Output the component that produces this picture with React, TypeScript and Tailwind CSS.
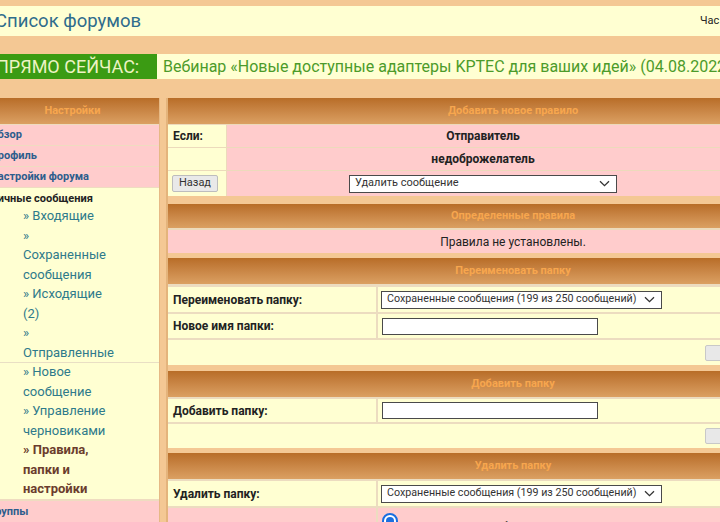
import React from 'react';

// Шапка секции с коричневым градиентом
const SectionHeader = ({ title, h = 'h-[26px]' }: { title: string; h?: string }) => (
  <div
    className={`${h} bg-gradient-to-b from-[#b86d27] to-[#dba062] flex items-center justify-center text-[11px] font-bold text-[#f7a64e]`}
  >
    {title}
  </div>
);

const Chevron = () => (
  <svg width="11" height="7" viewBox="0 0 11 7" className="shrink-0">
    <path d="M1 1.2 L5.5 5.6 L10 1.2" fill="none" stroke="#333" strokeWidth="1.3" />
  </svg>
);

const FakeSelect = ({ text, w, size = 'text-[11px]' }: { text: string; w: string; size?: string }) => (
  <div
    className={`${w} h-[18px] bg-white border-[1.5px] border-[#4a4a4a] flex items-center justify-between pl-[5px] pr-[6px] ${size} text-[#333] whitespace-nowrap`}
  >
    <span>{text}</span>
    <Chevron />
  </div>
);

const TextBox = () => (
  <div className="w-[216px] h-[17px] bg-white border-[1.5px] border-[#4a4a4a]" />
);

const GrayButton = () => (
  <div className="ml-[537px] w-[60px] h-[16px] bg-[#e8e8e8] border border-[#c8c8c8] rounded-[2px]" />
);

const sideLinks1 = [
  ['» Входящие'],
  ['»', 'Сохраненные', 'сообщения'],
  ['» Исходящие', '(2)'],
  ['»', 'Отправленные'],
];

const sideLinks2 = [
  ['» Новое', 'сообщение'],
  ['» Управление', 'черновиками'],
];

const folderText = 'Сохраненные сообщения (199 из 250 сообщений)';

export default function App() {
  return (
    <div className="w-[720px] h-[522px] overflow-hidden bg-[#f4c894] font-['Roboto',sans-serif]">
      <div className="h-[6px]" />

      {/* Верхняя полоса */}
      <div className="h-[30px] bg-[#ffffd2] flex items-start">
        <span className="-ml-[5px] mt-[3px] text-[18.5px] leading-[24px] text-[#2f6c8c] whitespace-nowrap">
          Список форумов
        </span>
        <div className="flex-1" />
        <span className="w-[20px] mt-[8px] text-[11px] leading-[14px] text-[#222] whitespace-nowrap overflow-hidden">
          Час
        </span>
      </div>

      {/* Объявление */}
      <div className="mt-[18px] h-[25px] flex">
        <div className="w-[157px] shrink-0 bg-[#3b9b13] text-[#eef3c4] text-[18px] flex items-center overflow-hidden">
          <span className="-ml-[4px] whitespace-nowrap">ПРЯМО СЕЙЧАС:</span>
        </div>
        <div className="flex-1 bg-[#ffffd2] text-[#4c9b2a] text-[16px] pl-[6px] flex items-center whitespace-nowrap overflow-hidden">
          Вебинар «Новые доступные адаптеры KPTEC для ваших идей» (04.08.2022
        </div>
      </div>

      <div className="mt-[19px] flex items-start">
        {/* Левая колонка */}
        <div className="-ml-[14px] w-[174px] shrink-0 bg-[#efdcc0] flex flex-col gap-[1px] border-r border-[#e6b985]">
          <SectionHeader title="Настройки" />
          {['Обзор', 'Профиль', 'Настройки форума'].map((t) => (
            <div
              key={t}
              className="h-[20px] bg-[#ffcccc] pl-[4px] text-[11px] leading-[20px] font-bold text-[#2d5d8c] whitespace-nowrap"
            >
              {t}
            </div>
          ))}
          <div className="bg-[#ffffd2] pt-[4px]">
            <div className="pl-[4px] text-[11px] leading-[14px] font-bold text-[#222]">
              Личные сообщения
            </div>
            <div className="border-b border-[#e9dfc4] pl-[37px] text-[13px] leading-[19.5px] text-[#2e7a8b]">
              {sideLinks1.map((lines, i) => (
                <div key={i}>
                  {lines.map((l) => (
                    <div key={l}>{l}</div>
                  ))}
                </div>
              ))}
            </div>
            <div className="pl-[37px] text-[13px] leading-[19.5px] text-[#2e7a8b] -mt-[1px]">
              {sideLinks2.map((lines, i) => (
                <div key={i}>
                  {lines.map((l) => (
                    <div key={l}>{l}</div>
                  ))}
                </div>
              ))}
              <div className="font-bold text-[#6b3d2d]">
                <div>» Правила,</div>
                <div>папки и</div>
                <div>настройки</div>
              </div>
            </div>
          </div>
          <div className="mt-[1px] h-[24px] bg-[#ffcccc] pl-[4px] text-[11px] leading-[22px] font-bold text-[#2d5d8c]">
            Группы
          </div>
        </div>

        {/* Правая панель */}
        <div className="ml-[6px] w-[692px] shrink-0 border-l-2 border-[#e4b47c] text-[12px] text-[#222]">
          {/* Добавить новое правило */}
          <div className="bg-[#ecdabb] flex flex-col gap-[1px]">
            <SectionHeader title="Добавить новое правило" />
            <div className="grid grid-cols-[58px_512px_1fr] gap-x-[1px] h-[22px]">
              <div className="bg-[#ffffd2] pl-[5px] flex items-center font-bold">Если:</div>
              <div className="bg-[#ffcccc] flex items-center justify-center font-bold">Отправитель</div>
              <div className="bg-[#ffcccc]" />
            </div>
            <div className="grid grid-cols-[58px_512px_1fr] gap-x-[1px] h-[22px]">
              <div className="bg-[#ffffd2]" />
              <div className="bg-[#ffcccc] flex items-center justify-center font-bold">недоброжелатель</div>
              <div className="bg-[#ffcccc]" />
            </div>
            <div className="grid grid-cols-[58px_512px_1fr] gap-x-[1px] h-[25px]">
              <div className="bg-[#ffffd2] pl-[4px] flex items-center">
                <div className="w-[46px] h-[17px] bg-[#e9e9e9] border border-[#bdbdbd] rounded-[2px] flex items-center justify-center text-[11px] text-[#333]">
                  Назад
                </div>
              </div>
              <div className="bg-[#ffcccc] flex items-center justify-center">
                <FakeSelect text="Удалить сообщение" w="w-[268px]" />
              </div>
              <div className="bg-[#ffcccc]" />
            </div>
          </div>

          {/* Определенные правила */}
          <div className="mt-[8px] bg-[#ecdabb] flex flex-col gap-[2px]">
            <SectionHeader title="Определенные правила" h="h-[24px]" />
            <div className="h-[23px] bg-[#ffcccc] flex items-center justify-center">
              Правила не установлены.
            </div>
          </div>

          {/* Переименовать папку */}
          <div className="mt-[5px] bg-[#ecdcc0] flex flex-col gap-[2px]">
            <SectionHeader title="Переименовать папку" />
            <div className="mt-[1px] grid grid-cols-[208px_1fr] gap-x-[2px] h-[25px]">
              <div className="bg-[#ffffd2] pl-[5px] flex items-center font-bold">Переименовать папку:</div>
              <div className="bg-[#ffffd2] pl-[3px] flex items-center">
                <FakeSelect text={folderText} w="w-[281px]" size="text-[10.7px]" />
              </div>
            </div>
            <div className="grid grid-cols-[208px_1fr] gap-x-[2px] h-[24px]">
              <div className="bg-[#ffffd2] pl-[5px] flex items-center font-bold">Новое имя папки:</div>
              <div className="bg-[#ffffd2] pl-[4px] flex items-center">
                <TextBox />
              </div>
            </div>
            <div className="h-[25px] bg-[#ffffd2] flex items-center">
              <GrayButton />
            </div>
          </div>

          {/* Добавить папку */}
          <div className="mt-[6px] bg-[#ecdcc0] flex flex-col gap-[2px]">
            <SectionHeader title="Добавить папку" />
            <div className="grid grid-cols-[208px_1fr] gap-x-[2px] h-[23px]">
              <div className="bg-[#ffffd2] pl-[5px] flex items-center font-bold">Добавить папку:</div>
              <div className="bg-[#ffffd2] pl-[4px] flex items-center">
                <TextBox />
              </div>
            </div>
            <div className="h-[24px] bg-[#ffffd2] flex items-center">
              <GrayButton />
            </div>
          </div>

          {/* Удалить папку */}
          <div className="mt-[5px] bg-[#ecdcc0] flex flex-col gap-[2px]">
            <SectionHeader title="Удалить папку" />
            <div className="grid grid-cols-[208px_1fr] gap-x-[2px] h-[25px]">
              <div className="bg-[#ffffd2] pl-[5px] flex items-center font-bold">Удалить папку:</div>
              <div className="bg-[#ffffd2] pl-[3px] flex items-center">
                <FakeSelect text={folderText} w="w-[281px]" size="text-[10.7px]" />
              </div>
            </div>
            <div className="grid grid-cols-[208px_1fr] gap-x-[2px] h-[30px]">
              <div className="bg-[#ffcccc]" />
              <div className="bg-[#ffcccc] pl-[4px] pt-[5px] flex items-start gap-[6px]">
                <div className="w-[16px] h-[16px] rounded-full border-2 border-[#1a6fe0] bg-white flex items-center justify-center shrink-0">
                  <div className="w-[8px] h-[8px] rounded-full bg-[#1a6fe0]" />
                </div>
                <span className="mt-[6px] leading-[16px] whitespace-nowrap">Переместить сообщения в папку</span>
              </div>
            </div>
          </div>
        </div>
      </div>
    </div>
  );
}
